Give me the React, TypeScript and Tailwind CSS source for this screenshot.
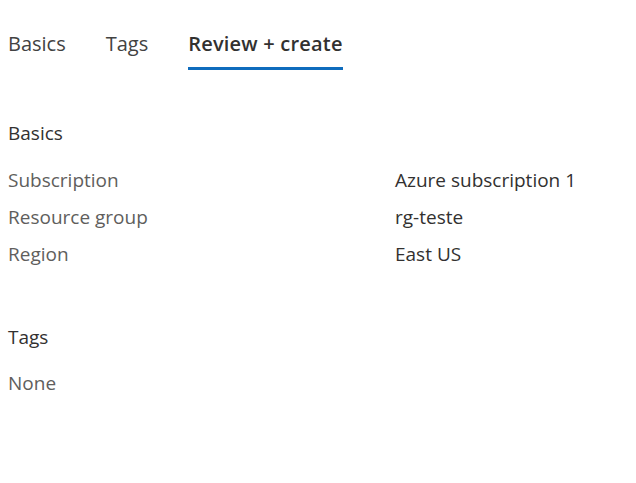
import React from "react";

const rows = [
  { label: "Subscription", value: "Azure subscription 1" },
  { label: "Resource group", value: "rg-teste" },
  { label: "Region", value: "East US" },
];

const App = () => {
  return (
    <div
      className="w-[636px] h-[483px] bg-white text-[#323130] text-[19px]"
      style={{ fontFamily: '"Open Sans", "Noto Sans", sans-serif' }}
    >
      {/* tabs */}
      <div className="flex flex-row pl-2 pt-[29px] gap-[40px] text-[20px]">
        <div className="pb-[8px] leading-[30px] text-[#424242]">Basics</div>
        <div className="pb-[8px] leading-[30px] text-[#424242]">Tags</div>
        <div className="pb-[8px] leading-[30px] font-semibold tracking-[0.2px] border-b-[3px] border-[#0f6cbd]">
          Review + create
        </div>
      </div>

      {/* basics section */}
      <div className="pl-2 pt-[48px]">
        <h2 className="leading-[30px]">Basics</h2>
        <div className="flex flex-col pt-[17px] gap-[7px]">
          {rows.map((r) => (
            <div key={r.label} className="flex flex-row leading-[30px]">
              <div className="w-[387px] text-[#605e5c]">{r.label}</div>
              <div>{r.value}</div>
            </div>
          ))}
        </div>
      </div>

      {/* tags section */}
      <div className="pl-2 pt-[53px]">
        <h2 className="leading-[30px]">Tags</h2>
        <p className="pt-[16px] leading-[30px] text-[#605e5c]">None</p>
      </div>
    </div>
  );
};

export default App;
